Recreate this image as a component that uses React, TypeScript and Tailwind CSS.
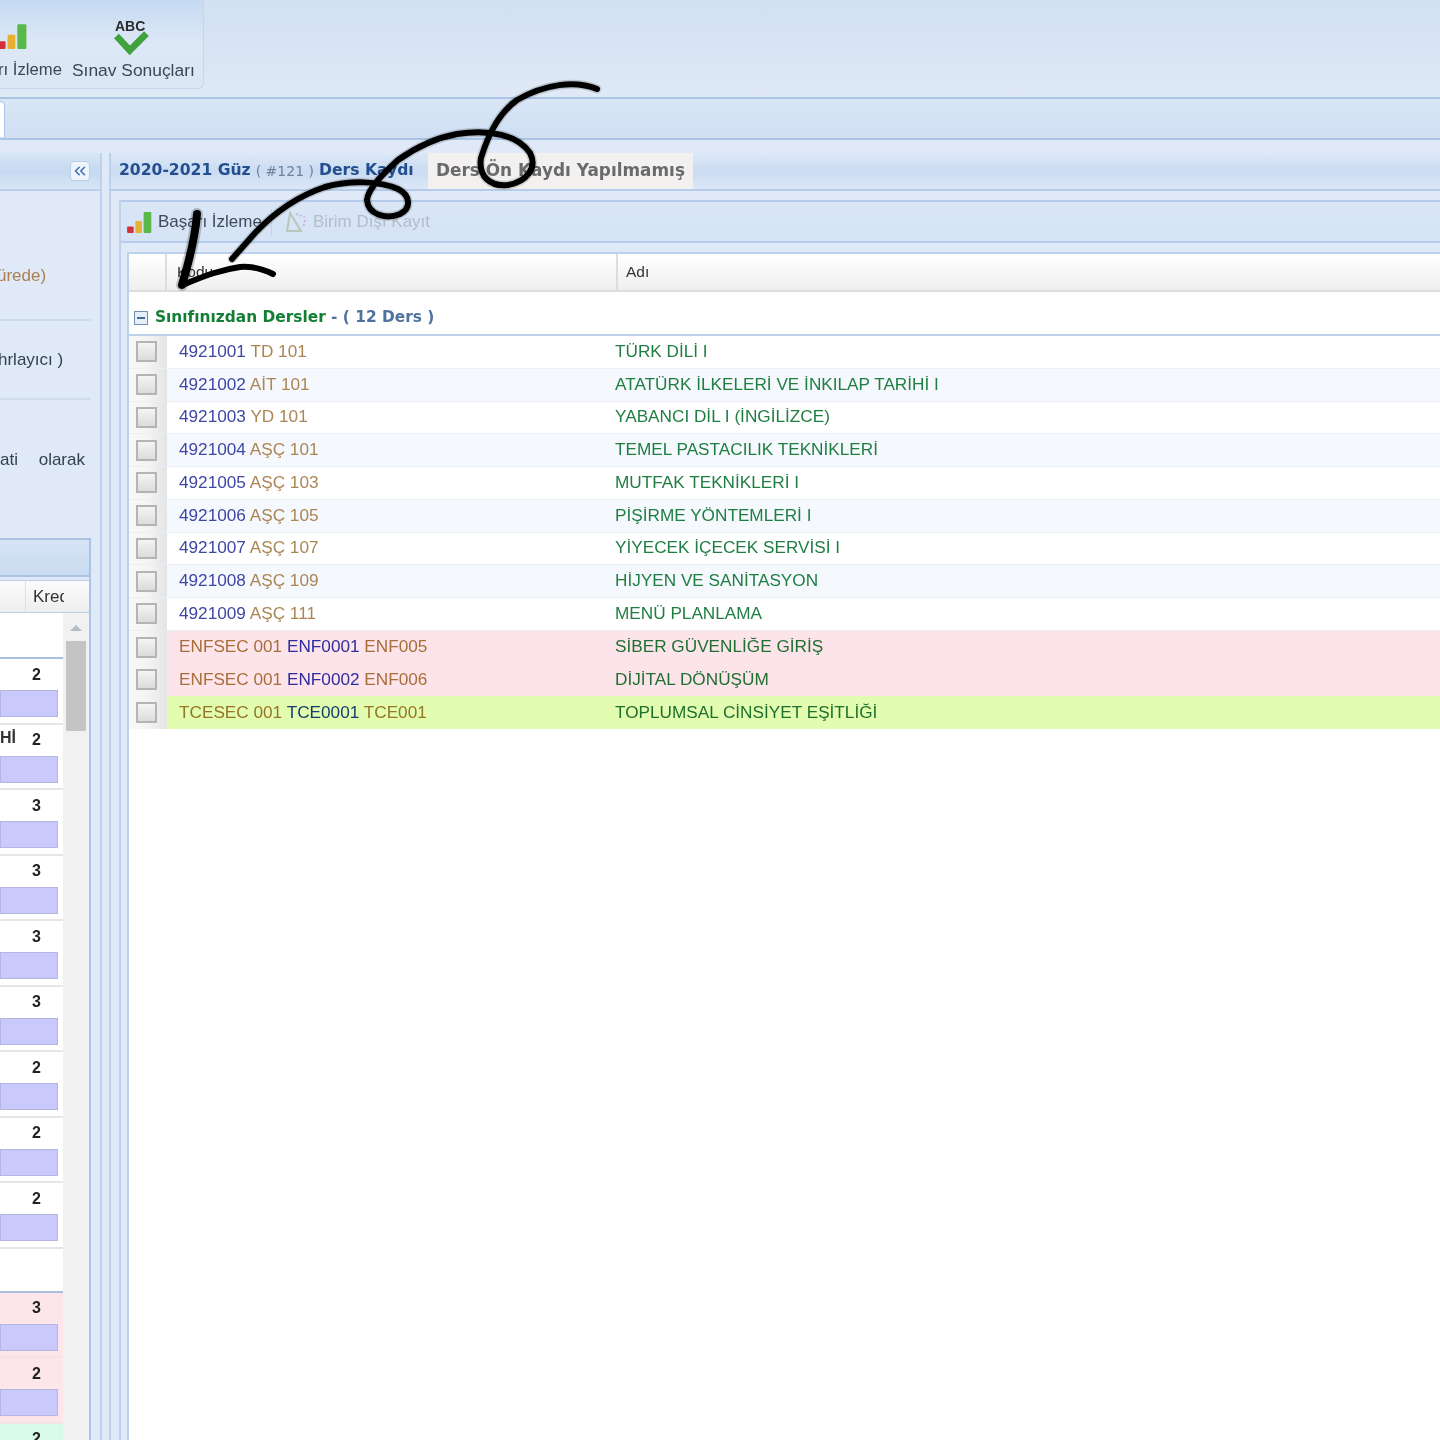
import { ChevronsLeft } from "lucide-react";

const mainRows = [
  { code: "4921001", short: "TD 101", name: "TÜRK DİLİ I" },
  { code: "4921002", short: "AİT 101", name: "ATATÜRK İLKELERİ VE İNKILAP TARİHİ I" },
  { code: "4921003", short: "YD 101", name: "YABANCI DİL I (İNGİLİZCE)" },
  { code: "4921004", short: "AŞÇ 101", name: "TEMEL PASTACILIK TEKNİKLERİ" },
  { code: "4921005", short: "AŞÇ 103", name: "MUTFAK TEKNİKLERİ I" },
  { code: "4921006", short: "AŞÇ 105", name: "PİŞİRME YÖNTEMLERİ I" },
  { code: "4921007", short: "AŞÇ 107", name: "YİYECEK İÇECEK SERVİSİ I" },
  { code: "4921008", short: "AŞÇ 109", name: "HİJYEN VE SANİTASYON" },
  { code: "4921009", short: "AŞÇ 111", name: "MENÜ PLANLAMA" },
];

const electiveRows = [
  { sec: "ENFSEC 001", code: "ENF0001", short: "ENF005", name: "SİBER GÜVENLİĞE GİRİŞ", bg: "bg-[#fde4ea]", tone: "text-[#a86e3a]", codeTone: "text-[#2f2c9c]" },
  { sec: "ENFSEC 001", code: "ENF0002", short: "ENF006", name: "DİJİTAL DÖNÜŞÜM", bg: "bg-[#fde4ea]", tone: "text-[#a86e3a]", codeTone: "text-[#2f2c9c]" },
  { sec: "TCESEC 001", code: "TCE0001", short: "TCE001", name: "TOPLUMSAL CİNSİYET EŞİTLİĞİ", bg: "bg-[#e2fdb0]", tone: "text-[#967526]", codeTone: "text-[#143d6e]" },
];

const sideRows = [
  { credit: "2", label: "" },
  { credit: "2", label: "Hİ" },
  { credit: "3", label: "" },
  { credit: "3", label: "" },
  { credit: "3", label: "" },
  { credit: "3", label: "" },
  { credit: "2", label: "" },
  { credit: "2", label: "" },
  { credit: "2", label: "" },
];

function Check() {
  return (
    <div className="flex w-[38px] shrink-0 items-center justify-center self-stretch bg-gradient-to-r from-[#f8f8f8] via-[#f4f4f4] to-[#e4e4e4]">
      <span className="mr-[3px] h-[21px] w-[21px] border-2 border-[#b4b4b4] bg-gradient-to-b from-[#f4f4f4] to-[#dcdcdc]" />
    </div>
  );
}

function BarsIcon({ className }: { className: string }) {
  return (
    <svg viewBox="0 0 28 20" className={className}>
      <rect x="0" y="14" width="6" height="6" rx="1" fill="#d4303a" />
      <rect x="7.5" y="9" width="6" height="11" rx="1" fill="#e8b030" />
      <rect x="15" y="1" width="7" height="19" rx="1" fill="#58b848" />
    </svg>
  );
}

function SideRow({ credit, label, bg, line }: { credit: string; label?: string; bg: string; line: string }) {
  return (
    <div className={`relative h-[65.5px] border-b-2 ${bg} ${line}`}>
      <div className="flex h-[31px] items-center justify-end pr-[22px] text-[16px] font-bold text-[#222222]">{credit}</div>
      {label && <span className="absolute left-0 top-[1px] text-[16px] font-bold text-[#333333]">{label}</span>}
      <div className="mr-[5px] h-[27px] border border-[#b3b6e0] bg-[#c9c9fb]" />
    </div>
  );
}

const scribblePath =
  "M597 89C575 80 545 84 517 100C500 112 488 135 481 158C478 176 490 187 508 185C526 182 538 168 530 153C518 135 490 129 457 134C435 138 415 148 398 160C385 172 368 188 367 200C368 214 385 220 400 214C412 208 410 195 398 189C380 181 350 180 325 187C295 197 272 215 255 233L232 259";

function Scribble() {
  return (
    <svg viewBox="0 0 1440 1440" className="pointer-events-none absolute left-0 top-0 h-[1440px] w-[1440px]" fill="none">
      <g stroke="#000" strokeLinecap="round" strokeLinejoin="round">
        <path d={scribblePath} strokeWidth="9" opacity="0.15" />
        <path d={scribblePath} strokeWidth="6" />
        <path d="M197 214C195 240 188 265 182 285" strokeWidth="12" opacity="0.2" />
        <path d="M197 214C195 240 188 265 182 285" strokeWidth="8" />
        <path d="M182 285C200 278 218 270 240 267C252 266 265 270 273 274" strokeWidth="6" />
      </g>
    </svg>
  );
}

export default function App() {
  return (
    <div className="relative flex h-[1440px] w-[1440px] flex-col overflow-hidden bg-[#dfe9f7] font-['Liberation_Sans',sans-serif] blur-[0.75px]">
      {/* ribbon */}
      <div className="flex h-[99px] shrink-0 border-b-2 border-[#a9c4e4] bg-gradient-to-b from-[#d2e0f1] to-[#dfe9f6]">
        <div className="flex h-[89px] w-[204px] items-end gap-[10px] rounded-br-md border-b border-r border-[#c6d6ea] bg-gradient-to-b from-[#c6daf2] via-[#dde8f6] to-[#dbe6f4] pb-[5px] text-[#3c4654]">
          <div className="relative -ml-[2px] shrink-0 whitespace-nowrap text-[16.7px] leading-[26px]">
            <BarsIcon className="absolute -top-[34px] -left-[1px] h-[26px] w-[38px]" />
            rı İzleme
          </div>
          <div className="relative whitespace-nowrap text-[17.4px]">
            <svg viewBox="0 0 36 36" className="absolute -top-[40px] left-[40px] h-[40px] w-[40px]">
              <path d="M4 17L16 30L31 15" fill="none" stroke="#3fa23c" strokeWidth="6" />
            </svg>
            <span className="absolute -top-[38px] left-[43px] text-[14px] font-bold leading-none text-[#2b2b2b]">ABC</span>
            Sınav Sonuçları
          </div>
        </div>
      </div>

      {/* tab strip */}
      <div className="flex h-[41px] shrink-0 items-end border-b-2 border-[#aac5e4] bg-gradient-to-b from-[#d9e6f6] to-[#cfdff2]">
        <div className="mb-[1px] h-[36px] w-[5px] rounded-tr-md border-r border-t border-[#a9c4e4] bg-white" />
      </div>

      <div className="flex min-h-0 flex-1 pt-[13px]">
        {/* left panel */}
        <div className="flex w-[102px] shrink-0 flex-col border-r-2 border-[#bcd2ec]">
          <div className="flex h-[38px] shrink-0 items-center justify-end border-b-2 border-[#b9d0ec] bg-gradient-to-b from-[#d9e6f6] via-[#c6d9f1] to-[#d7e5f6] pr-[10px]">
            <span className="flex h-[20px] w-[20px] items-center justify-center rounded-sm border border-[#b8cfe9] bg-[#edf4fc] text-[#3f70b8]">
              <ChevronsLeft size={18} strokeWidth={2} />
            </span>
          </div>
          <div className="flex h-[347px] shrink-0 flex-col overflow-hidden pr-[9px] text-[17px] text-[#33424b]">
            <div className="h-[130px] shrink-0 whitespace-nowrap border-b-2 border-[#cfdcec] pt-[72px] text-[#ac8050]">
              <span className="-ml-[3px] block">ürede)</span>
            </div>
            <div className="flex h-[79px] shrink-0 items-center whitespace-nowrap border-b-2 border-[#cfdcec]">
              <span className="-ml-[2px]">hrlayıcı )</span>
            </div>
            <div className="flex justify-between whitespace-nowrap pr-[6px] pt-[47px]">
              <span>ati</span>
              <span>olarak</span>
            </div>
          </div>
          <div className="mr-[9px] flex min-h-0 flex-1 flex-col border-r-2 border-[#aac5e4]">
            <div className="h-[39px] shrink-0 border-y-2 border-[#a9c4e4] bg-gradient-to-b from-[#d6e4f5] to-[#c9dbf1]" />
            <div className="mt-[3px] flex h-[33px] shrink-0 justify-end border-y border-[#b9cfe9] bg-gradient-to-b from-[#fbfbfb] to-[#eeeeee]">
              <span className="h-full w-[39px] overflow-hidden whitespace-nowrap border-l border-[#e0e0e0] pl-[7px] pt-[3px] text-[17px] text-[#333333]">Kredi</span>
              <span className="w-[25px]" />
            </div>
            <div className="flex min-h-0 flex-1">
              <div className="w-[63px] shrink-0 bg-white">
                <div className="h-[46px] border-b-2 border-[#a9bfdc]" />
                {sideRows.map((row, i) => (
                  <SideRow key={i} credit={row.credit} label={row.label} bg="bg-white" line="border-[#e6e6e6]" />
                ))}
                <div className="h-[44px] border-b-2 border-[#a9bfdc] bg-white" />
                <SideRow credit="3" bg="bg-[#fde6ea]" line="border-[#f0e4e6]" />
                <SideRow credit="2" bg="bg-[#fde6ea]" line="border-[#f0e4e6]" />
                <div className="h-[65.5px] bg-[#d8fbe8]">
                  <div className="flex h-[31px] items-center justify-end pr-[22px] text-[16px] font-bold text-[#222222]">2</div>
                </div>
              </div>
              <div className="flex flex-1 flex-col items-center bg-[#f1f1f1] pt-[12px]">
                <span className="h-0 w-0 border-x-[6px] border-b-[6px] border-x-transparent border-b-[#b4bcc6]" />
                <span className="mt-[10px] h-[90px] w-[20px] bg-[#c4c4c4]" />
              </div>
            </div>
          </div>
        </div>

        {/* main panel */}
        <div className="ml-[7px] flex min-w-0 flex-1 flex-col border-l-2 border-[#bcd2ec]">
          <div className="flex h-[38px] shrink-0 items-stretch border-b-2 border-[#b5cdea] bg-gradient-to-b from-[#dde8f6] via-[#cadcf2] to-[#dbe7f6] pl-[8px]">
            <div className="flex w-[309px] items-center whitespace-nowrap font-['DejaVu_Sans',sans-serif] text-[15.6px] font-bold text-[#234e90]">
              2020-2021 Güz <span className="mx-[5px] text-[14px] font-normal text-[#6f829c]">( #121 )</span> Ders Kaydı
            </div>
            <div className="flex items-center whitespace-nowrap bg-[#f2f1ef] px-[8px] font-['DejaVu_Sans',sans-serif] text-[16.9px] font-bold text-[#6a6a6d]">
              Ders Ön Kaydı Yapılmamış
            </div>
          </div>
          <div className="flex min-h-0 flex-1 flex-col pl-[8px] pt-[9px]">
            <div className="flex min-h-0 flex-1 flex-col border-l-2 border-[#bcd2ec]">
              <div className="flex h-[43px] shrink-0 items-center border-y-2 border-[#b5cdea] bg-gradient-to-b from-[#dae6f6] to-[#d5e3f5] pl-[6px] text-[17px]">
                <BarsIcon className="h-[22px] w-[31px]" />
                <span className="whitespace-nowrap text-[#3f4b58]">Başarı İzleme</span>
                <span className="ml-[9px] mr-[12px] h-[26px] w-px bg-[#c3d4ea]" />
                <svg viewBox="0 0 24 24" className="h-[24px] w-[24px]" fill="none">
                  <path d="M3 21H17L6 3Z" stroke="#b8c8b8" strokeWidth="2" />
                  <path d="M12 4L21 7M21 10L19 18" stroke="#c8b4dc" strokeWidth="2" strokeDasharray="2 2" />
                </svg>
                <span className="ml-[5px] whitespace-nowrap text-[#b4bdc8]">Birim Dışı Kayıt</span>
              </div>
              <div className="flex min-h-0 flex-1 flex-col pl-[6px] pt-[9px]">
                <div className="flex min-h-0 flex-1 flex-col border-l-2 border-t-2 border-[#bcd2ec] bg-white">
                  <div className="flex h-[38px] shrink-0 border-b-2 border-[#dddddd] bg-gradient-to-b from-[#ffffff] to-[#efefef] text-[15.5px] text-[#333333]">
                    <div className="w-[38px] shrink-0 border-r-2 border-[#dddddd]" />
                    <div className="flex w-[451px] shrink-0 items-center border-r-2 border-[#dddddd] pl-[10px]">Kodu</div>
                    <div className="flex items-center pl-[8px]">Adı</div>
                  </div>
                  <div className="flex h-[44px] shrink-0 items-center border-b-2 border-[#bcd2ec] pl-[5px] pt-[10px]">
                    <span className="flex h-[14px] w-[14px] items-center justify-center border border-[#6f8fb4] bg-[#e6eef8]">
                      <span className="h-[2px] w-[8px] bg-[#476a96]" />
                    </span>
                    <span className="ml-[7px] whitespace-nowrap font-['DejaVu_Sans',sans-serif] text-[15.4px] font-bold text-[#127f34]">
                      Sınıfınızdan Dersler <span className="text-[#4f729f]">- ( 12 Ders )</span>
                    </span>
                  </div>
                  {mainRows.map((row, i) => (
                    <div key={row.code} className={`flex h-[32.75px] shrink-0 items-center border-b border-[#eaeff6] text-[17.2px] ${i % 2 === 1 ? "bg-[#f5f8fd]" : "bg-white"}`}>
                      <Check />
                      <div className="w-[448px] shrink-0 whitespace-nowrap pl-[12px]">
                        <span className="text-[#3f47a3]">{row.code}</span> <span className="text-[#ab8554]">{row.short}</span>
                      </div>
                      <div className="whitespace-nowrap text-[#1f7f42]">{row.name}</div>
                    </div>
                  ))}
                  {electiveRows.map((row) => (
                    <div key={row.code} className={`flex h-[32.75px] shrink-0 items-center text-[17.2px] ${row.bg}`}>
                      <Check />
                      <div className="w-[448px] shrink-0 whitespace-nowrap pl-[12px]">
                        <span className={row.tone}>{row.sec}</span> <span className={row.codeTone}>{row.code}</span> <span className={row.tone}>{row.short}</span>
                      </div>
                      <div className="whitespace-nowrap text-[#1f7030]">{row.name}</div>
                    </div>
                  ))}
                </div>
              </div>
            </div>
          </div>
        </div>
      </div>
      <Scribble />
    </div>
  );
}
